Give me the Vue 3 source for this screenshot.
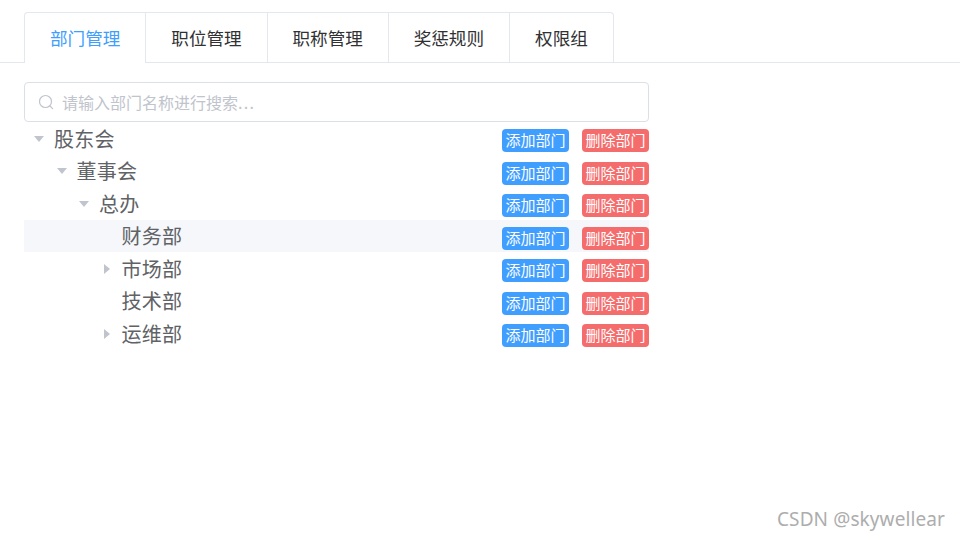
<template>
  <div class="page">
    <div class="tabs">
      <div class="tab-list">
        <div v-for="(tab, i) in tabs" :key="tab" class="tab" :class="{ active: i === 0 }">{{ tab }}</div>
      </div>
    </div>

    <div class="panel">
      <div class="search">
        <svg class="search-icon" viewBox="0 0 16 16" fill="none" stroke="#c0c4cc" stroke-width="1.2">
          <circle cx="7.5" cy="7.5" r="6" />
          <path d="M12 12l2.6 2.6" stroke-linecap="round" />
        </svg>
        <span class="placeholder">请输入部门名称进行搜索<span class="dots">...</span></span>
      </div>

      <div class="tree">
        <div v-for="node in nodes" :key="node.name" class="row" :class="{ hover: node.hover }">
          <div class="label" :style="{ paddingLeft: node.level * 22.5 + 'px' }">
            <span class="arrow" :class="node.arrow"></span>
            <span class="name">{{ node.name }}</span>
          </div>
          <div class="actions">
            <span class="btn blue">添加部门</span>
            <span class="btn red">删除部门</span>
          </div>
        </div>
      </div>
    </div>

    <div class="watermark">CSDN @skywellear</div>
  </div>
</template>

<script setup>
const tabs = ['部门管理', '职位管理', '职称管理', '奖惩规则', '权限组']

const nodes = [
  { name: '股东会', level: 0, arrow: 'down' },
  { name: '董事会', level: 1, arrow: 'down' },
  { name: '总办', level: 2, arrow: 'down' },
  { name: '财务部', level: 3, arrow: 'none', hover: true },
  { name: '市场部', level: 3, arrow: 'right' },
  { name: '技术部', level: 3, arrow: 'none' },
  { name: '运维部', level: 3, arrow: 'right' }
]
</script>

<style>
html,
body {
  background: #fff;
}
</style>

<style scoped>
.page {
  position: relative;
  width: 960px;
  height: 540px;
  overflow: hidden;
  padding: 12px 0 0 24px;
  box-sizing: border-box;
  font-family: "Noto Sans CJK SC", "Liberation Sans", sans-serif;
}

.tabs {
  margin-left: -24px;
  padding-left: 24px;
  border-bottom: 1px solid #e4e7ed;
  height: 50px;
}

.tab-list {
  display: flex;
  width: max-content;
  height: 51px;
  box-sizing: border-box;
  border: 1px solid #e4e7ed;
  border-bottom: none;
  border-radius: 4px 4px 0 0;
}

.tab {
  width: 121.2px;
  box-sizing: border-box;
  border-left: 1px solid #e4e7ed;
  border-bottom: 1px solid #e4e7ed;
  text-align: center;
  line-height: 49px;
  font-size: 17.6px;
  color: #303133;
}

.tab:first-child {
  width: 120.4px;
  border-left: none;
}

.tab:last-child {
  width: 104px;
}

.tab.active {
  color: #409eff;
  border-bottom-color: #fff;
}

.panel {
  width: 625px;
  margin-top: 19px;
}

.search {
  display: flex;
  align-items: center;
  height: 40px;
  box-sizing: border-box;
  padding-left: 13px;
  border: 1px solid #dcdfe6;
  border-radius: 4px;
}

.search-icon {
  width: 16px;
  height: 16px;
  margin-right: 8px;
}

.placeholder {
  font-size: 16px;
  color: #c0c4cc;
}

.dots {
  letter-spacing: 1.3px;
}

.tree {
  margin-top: 0.4px;
}

.row {
  display: flex;
  align-items: center;
  justify-content: space-between;
  height: 32.5px;
}

.row.hover {
  background: #f5f7fa;
}

.label {
  display: flex;
  align-items: center;
}

.arrow {
  width: 30px;
  height: 12px;
  display: flex;
  flex-shrink: 0;
  position: relative;
}

.arrow.down::before {
  content: "";
  position: absolute;
  left: 10px;
  top: 3px;
  border-style: solid;
  border-width: 6px 5px 0 5px;
  border-color: #c0c4cc transparent transparent transparent;
}

.arrow.right::before {
  content: "";
  position: absolute;
  left: 12px;
  top: 1px;
  border-style: solid;
  border-width: 5px 0 5px 6px;
  border-color: transparent transparent transparent #c0c4cc;
}

.name {
  font-size: 20px;
  color: #606266;
  line-height: 32px;
  letter-spacing: 0.3px;
}

.actions {
  display: flex;
  gap: 13px;
  margin-top: 4px;
}

.btn {
  width: 67px;
  height: 23px;
  border-radius: 4px;
  color: #fff;
  font-size: 15px;
  line-height: 21px;
  text-align: center;
}

.btn.blue {
  background: #409eff;
}

.btn.red {
  background: #f56c6c;
}

.watermark {
  position: absolute;
  right: 15px;
  top: 506px;
  font-family: "Noto Sans", sans-serif;
  font-size: 19px;
  color: #adadad;
  letter-spacing: 0.1px;
}
</style>
